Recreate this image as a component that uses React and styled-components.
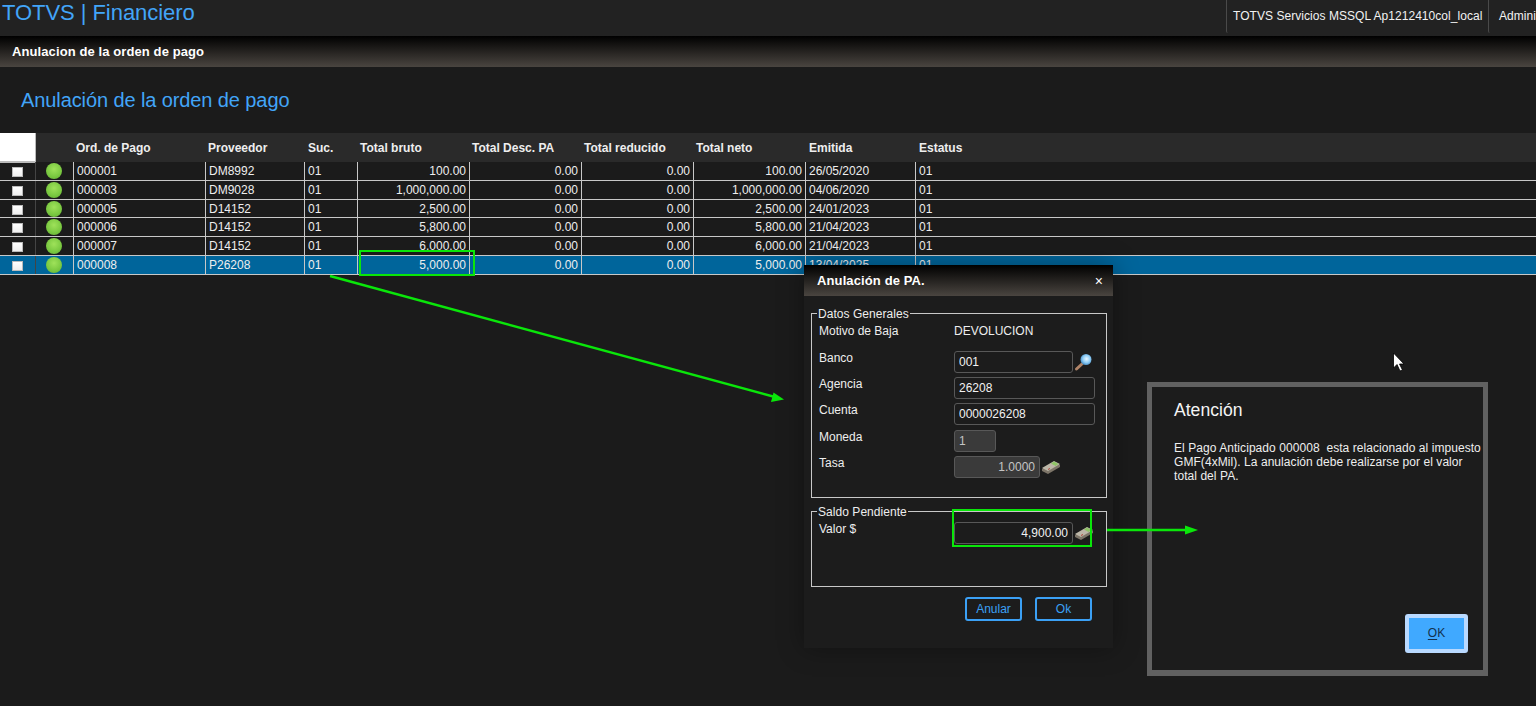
import React from "react";
import styled, { createGlobalStyle } from "styled-components";

const Global = createGlobalStyle`
  html, body { margin: 0; padding: 0; height: 100%; overflow: hidden; background: #1b1b1b; }
  body { font-family: "Liberation Sans", Arial, sans-serif; font-size: 12px; color: #eee; }
  * { box-sizing: border-box; }
`;

const Page = styled.div`
  position: relative;
  width: 1536px;
  height: 706px;
  overflow: hidden;
  background: #1b1b1b;
`;

const TopBar = styled.header`
  height: 36px;
  background: #222;
  display: flex;
  justify-content: space-between;
  overflow: hidden;
`;

const Brand = styled.div`
  font-size: 22px;
  line-height: 25px;
  letter-spacing: -0.05px;
  color: #42a5f8;
  padding-left: 2px;
`;

const TopInfo = styled.div`
  display: flex;
  width: 310px;
  flex: none;
`;

const TopItem = styled.div`
  width: ${(p) => p.$w}px;
  height: 33px;
  flex: none;
  padding: 9px 0 0 ${(p) => p.$pad}px;
  border-left: 1px solid #4a4a4a;
  border-bottom-left-radius: 2px;
  line-height: 14px;
  letter-spacing: 0.05px;
  color: #f2f2f2;
  white-space: nowrap;
`;

const SubBar = styled.div`
  height: 31px;
  background: linear-gradient(#000, #4a4540);
  padding: 8px 12px 0;
  font-weight: bold;
  font-size: 13px;
  line-height: 15px;
  letter-spacing: 0.1px;
  color: #fff;
`;

const Title = styled.h1`
  margin: 0;
  padding: 22px 0 0 21px;
  height: 66px;
  font-size: 20px;
  line-height: 23px;
  letter-spacing: -0.1px;
  font-weight: normal;
  color: #42a5f8;
`;

const COLS = "36px 38px 132px 99px 53px 112px 112px 112px 112px 110px 1fr";

const HeaderRow = styled.div`
  display: grid;
  grid-template-columns: ${COLS};
  height: 29px;
  background: #2a2a2a;
`;

const HeadBlank = styled.div`
  background: #fff;
  border-right: 1px solid #bbb;
  border-bottom: 2px solid #bbb;
`;

const HeadCell = styled.div`
  font-weight: bold;
  color: #eee;
  line-height: 30px;
  padding-left: ${(p) => p.$pad}px;
  white-space: nowrap;
`;

const Row = styled.div`
  display: grid;
  grid-template-columns: ${COLS};
  height: 18.84px;
  background: ${(p) => (p.$selected ? "#00659b" : "#1b1b1b")};
  border-bottom: 1px solid #c8c8c8;
`;

const CheckCell = styled.div`
  display: flex;
  align-items: center;
  justify-content: center;
  padding-top: 2px;
  border-right: 1px solid #444;
`;

const Box = styled.span`
  display: block;
  width: 11px;
  height: 10px;
  background: linear-gradient(#fff, #efefef);
  border: 1px solid #bbb;
`;

const DotCell = styled.div`
  display: flex;
  align-items: center;
  justify-content: center;
  border-right: 1px solid #c8c8c8;
  padding-right: 1px;
`;

const Dot = styled.span`
  display: block;
  width: 16px;
  height: 16px;
  border-radius: 50%;
  background: radial-gradient(circle at 50% 38%, #9fe25a 0, #7cca42 55%, #5fae30 100%);
`;

const Cell = styled.div`
  line-height: 19px;
  padding: 0 ${(p) => (p.$right ? 3 : 0)}px 0 3px;
  text-align: ${(p) => (p.$right ? "right" : "left")};
  border-right: ${(p) => (p.$last ? "none" : "1px solid #c8c8c8")};
  color: #eee;
  white-space: nowrap;
  overflow: hidden;
`;

const Modal = styled.section`
  position: absolute;
  left: 804px;
  top: 265px;
  width: 309px;
  height: 383px;
  background: #1c1c1c;
  box-shadow: 0 0 24px rgba(0, 0, 0, 0.35);
`;

const ModalHead = styled.div`
  height: 31px;
  background: linear-gradient(#000, #4a4540);
  display: flex;
  align-items: center;
  justify-content: space-between;
  padding: 0 10px 0 13px;
  font-weight: bold;
  font-size: 13px;
  letter-spacing: 0.12px;
  color: #fff;
`;

const CloseMark = styled.span`
  font-size: 14px;
  font-weight: normal;
  color: #fff;
`;

const Group = styled.fieldset`
  margin: ${(p) => p.$top}px 6px 0 7px;
  height: ${(p) => p.$height}px;
  padding: 0 7px 0 7px;
  border: 1px solid #c8c8c8;
  min-width: 0;
`;

const GroupTitle = styled.legend`
  padding: 2px 1px 0;
  margin-left: -2px;
  font-size: 12px;
  line-height: 14px;
  letter-spacing: 0.05px;
  color: #eee;
`;

const FormRow = styled.div`
  display: grid;
  grid-template-columns: 135px 1fr;
  height: ${(p) => p.$h}px;
  padding-top: ${(p) => p.$top || 0}px;
  line-height: 13px;
`;

const FieldLabel = styled.span`
  padding-top: 1px;
  color: #eee;
`;

const FieldWrap = styled.div`
  display: flex;
  align-items: center;
  align-self: flex-start;
  gap: 1px;
`;

const Input = styled.input`
  display: block;
  width: ${(p) => p.$w}px;
  height: 22px;
  padding: 0 4px;
  font: 12px "Liberation Sans", Arial, sans-serif;
  text-align: ${(p) => (p.$right ? "right" : "left")};
  color: ${(p) => (p.disabled ? "#c4c4c4" : "#f2f2f2")};
  background: ${(p) => (p.disabled ? "#3a3a3a" : "#1c1c1c")};
  border: 1px solid #585858;
  border-radius: 3px;
  outline: none;
  opacity: 1;
`;

const ButtonRow = styled.div`
  display: flex;
  justify-content: flex-end;
  gap: 13px;
  padding: 10px 21px 0 0;
`;

const Button = styled.button`
  width: 57px;
  height: 24px;
  padding: 0;
  background: transparent;
  border: 2px solid #3ba0f5;
  border-radius: 3px;
  color: #3ba0f5;
  font: 12px "Liberation Sans", Arial, sans-serif;
`;

const Alert = styled.section`
  position: absolute;
  left: 1147px;
  top: 382px;
  width: 341px;
  height: 294px;
  background: #1c1c1c;
  border: 5px solid #616161;
  border-bottom-width: 6px;
  padding: 14px 0 0 22px;
`;

const AlertTitle = styled.h2`
  margin: 0;
  font-size: 17.6px;
  line-height: 19px;
  font-weight: normal;
  color: #f4f4f4;
`;

const AlertText = styled.p`
  margin: 21px 0 0;
  width: 312px;
  font-size: 12px;
  line-height: 14px;
  letter-spacing: 0.06px;
  white-space: pre-wrap;
  color: #eee;
`;

const AlertButton = styled.button`
  position: absolute;
  right: 15px;
  bottom: 17px;
  width: 63px;
  height: 39px;
  padding: 0 0 2px;
  background: #40a9ff;
  border: 4px solid #b9d9ff;
  border-radius: 3px;
  color: #12314d;
  font: 12px "Liberation Sans", Arial, sans-serif;
  u { text-underline-offset: 2px; }
`;

const Marker = styled.div`
  position: absolute;
  left: ${(p) => p.$x}px;
  top: ${(p) => p.$y}px;
  width: ${(p) => p.$w}px;
  height: ${(p) => p.$h}px;
  border: 2px solid #0ae60a;
  pointer-events: none;
`;

const Overlay = styled.svg`
  position: absolute;
  left: 0;
  top: 0;
  pointer-events: none;
`;

const Magnifier = () => (
  <svg width="20" height="20" viewBox="0 0 20 20">
    <defs>
      <radialGradient id="lens" cx="55%" cy="45%" r="60%">
        <stop offset="0" stopColor="#e8f6ff" />
        <stop offset="0.55" stopColor="#8fcdf5" />
        <stop offset="1" stopColor="#3d86c0" />
      </radialGradient>
    </defs>
    <path d="M8.5 11.5 L2.5 17" stroke="#b08468" strokeWidth="3" strokeLinecap="round" />
    <circle cx="12" cy="7.5" r="5.5" fill="url(#lens)" />
  </svg>
);

const Money = () => (
  <svg width="20" height="16" viewBox="0 0 20 16">
    <path d="M1 10 L13 3 L19 6 L19 8 L7 15 L1 12 Z" fill="#7d7568" />
    <path d="M1 9 L13 2 L19 5 L7 12 Z" fill="#bdb7a8" />
    <path d="M10 4.5 L13 2.5 L17.5 5 L14.5 7 Z" fill="#8ec466" />
    <path d="M7 10.5 L9 9.5" stroke="#b0443a" strokeWidth="1" />
  </svg>
);

const rows = [
  ["000001", "DM8992", "100.00", "26/05/2020"],
  ["000003", "DM9028", "1,000,000.00", "04/06/2020"],
  ["000005", "D14152", "2,500.00", "24/01/2023"],
  ["000006", "D14152", "5,800.00", "21/04/2023"],
  ["000007", "D14152", "6,000.00", "21/04/2023"],
  ["000008", "P26208", "5,000.00", "13/04/2025"],
];

const heads = [
  ["Ord. de Pago", 2],
  ["Proveedor", 2],
  ["Suc.", 3],
  ["Total bruto", 2],
  ["Total Desc. PA", 2],
  ["Total reducido", 2],
  ["Total neto", 2],
  ["Emitida", 3],
  ["Estatus", 3],
];

export default function App() {
  return (
    <Page>
      <Global />
      <TopBar>
        <Brand>TOTVS | Financiero</Brand>
        <TopInfo>
          <TopItem $w={262} $pad={6}>TOTVS Servicios MSSQL Ap1212410col_local</TopItem>
          <TopItem $w={48} $pad={10}>Administrador</TopItem>
        </TopInfo>
      </TopBar>
      <SubBar>Anulacion de la orden de pago</SubBar>
      <Title>Anulación de la orden de pago</Title>

      <HeaderRow>
        <HeadBlank />
        <div />
        {heads.map(([h, p]) => (
          <HeadCell key={h} $pad={p}>{h}</HeadCell>
        ))}
      </HeaderRow>
      {rows.map((r, i) => (
        <Row key={r[0]} $selected={i === 5}>
          <CheckCell><Box /></CheckCell>
          <DotCell><Dot /></DotCell>
          <Cell>{r[0]}</Cell>
          <Cell>{r[1]}</Cell>
          <Cell>01</Cell>
          <Cell $right>{r[2]}</Cell>
          <Cell $right>0.00</Cell>
          <Cell $right>0.00</Cell>
          <Cell $right>{r[2]}</Cell>
          <Cell>{r[3]}</Cell>
          <Cell $last>01</Cell>
        </Row>
      ))}

      <Modal>
        <ModalHead>
          Anulación de PA.
          <CloseMark>×</CloseMark>
        </ModalHead>
        <Group $top={9} $height={193}>
          <GroupTitle>Datos Generales</GroupTitle>
          <FormRow $h={30} $top={3}>
            <FieldLabel>Motivo de Baja</FieldLabel>
            <FieldLabel>DEVOLUCION</FieldLabel>
          </FormRow>
          <FormRow $h={26.2}>
            <FieldLabel>Banco</FieldLabel>
            <FieldWrap>
              <Input $w={119} value="001" readOnly />
              <Magnifier />
            </FieldWrap>
          </FormRow>
          <FormRow $h={26.2}>
            <FieldLabel>Agencia</FieldLabel>
            <FieldWrap><Input $w={141} value="26208" readOnly /></FieldWrap>
          </FormRow>
          <FormRow $h={26.2}>
            <FieldLabel>Cuenta</FieldLabel>
            <FieldWrap><Input $w={141} value="0000026208" readOnly /></FieldWrap>
          </FormRow>
          <FormRow $h={26.2}>
            <FieldLabel>Moneda</FieldLabel>
            <FieldWrap><Input $w={42} value="1" disabled /></FieldWrap>
          </FormRow>
          <FormRow $h={26.2}>
            <FieldLabel>Tasa</FieldLabel>
            <FieldWrap>
              <Input $w={86} $right value="1.0000" disabled />
              <Money />
            </FieldWrap>
          </FormRow>
        </Group>
        <Group $top={5} $height={84}>
          <GroupTitle>Saldo Pendiente</GroupTitle>
          <FormRow $h={26.2} $top={3}>
            <FieldLabel>Valor $</FieldLabel>
            <FieldWrap>
              <Input $w={119} $right value="4,900.00" readOnly />
              <Money />
            </FieldWrap>
          </FormRow>
        </Group>
        <ButtonRow>
          <Button>Anular</Button>
          <Button>Ok</Button>
        </ButtonRow>
      </Modal>

      <Alert>
        <AlertTitle>Atención</AlertTitle>
        <AlertText>El Pago Anticipado 000008  esta relacionado al impuesto GMF(4xMil). La anulación debe realizarse por el valor total del PA.</AlertText>
        <AlertButton><u>O</u>K</AlertButton>
      </Alert>

      <Marker $x={359} $y={250} $w={116} $h={26} />
      <Marker $x={952} $y={509} $w={140} $h={38} />

      <Overlay width="1536" height="706" viewBox="0 0 1536 706">
        <line x1="330" y1="276" x2="775" y2="397" stroke="#0ae60a" strokeWidth="2.4" />
        <polygon points="784,399.5 771,402 773.5,392.5" fill="#0ae60a" />
        <line x1="1107" y1="530" x2="1186" y2="530" stroke="#0ae60a" strokeWidth="2.4" />
        <polygon points="1198,530 1185,525.5 1185,534.5" fill="#0ae60a" />
        <path d="M1393.5 353 V368 L1397 364.5 L1400 371 L1402.5 370 L1399.5 364 H1404 Z" fill="#fff" stroke="#000" strokeWidth="0.8" />
      </Overlay>
    </Page>
  );
}
